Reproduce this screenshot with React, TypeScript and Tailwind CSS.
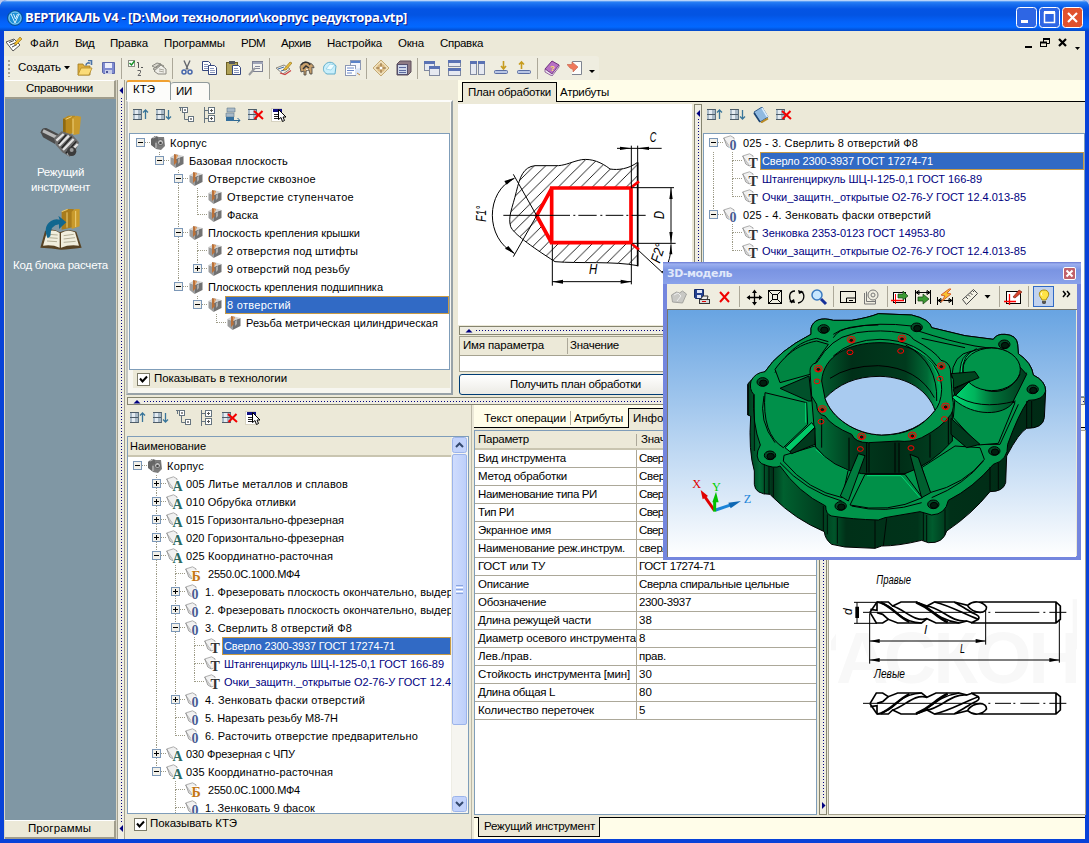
import React, { useLayoutEffect, useRef, useState } from 'react';

/* Text set to a given advance width */
function T({ w, children, className = '' }: { w: number; children: string; className?: string }) {
  const ref = useRef<HTMLSpanElement>(null);
  const [ls, setLs] = useState(0);
  useLayoutEffect(() => {
    const el = ref.current;
    if (!el) return;
    const prev = el.style.letterSpacing;
    el.style.letterSpacing = '0px';
    const nat = el.getBoundingClientRect().width;
    el.style.letterSpacing = prev;
    setLs((w - nat) / children.length);
  }, [w, children]);
  return (
    <span ref={ref} className={`inline-block shrink-0 whitespace-pre ${className}`} style={{ letterSpacing: ls }}>
      {children}
    </span>
  );
}

function Box({ children, s = 16, v = 16, className = '' }: { children: React.ReactNode; s?: number; v?: number; className?: string }) {
  return (
    <svg width={s} height={s} viewBox={`0 0 ${v} ${v}`} className={`shrink-0 ${className}`}>
      {children}
    </svg>
  );
}

const rack = (
  <g>
    <path d="M0 3h9v4H0zM0 8h9v4H0z" fill="#a9b9c6" />
    <path d="M0 2.500H9M0 7.500H9M0 12.500H9" stroke="#4d5c68" />
    <path d="M2 3h3v4H2zM2 8h3v4H2z" fill="#e4ebf1" />
    <path d="M8.500 2.500v10" stroke="#5f7484" />
  </g>
);
const sheet = (x: number, y: number) => (
  <g>
    <path d={`M${x + 0.5} ${y + 0.5}h6l2 2v7h-8z`} fill="#fff" stroke="#35477e" />
    <path d={`M${x + 2} ${y + 3.5}h4M${x + 2} ${y + 5.5}h5M${x + 2} ${y + 7.5}h5`} stroke="#8a97bd" />
  </g>
);
const win = (x: number, y: number, w: number, h: number) => (
  <g>
    <rect x={x + 0.5} y={y + 0.5} width={w} height={h} fill="#e6e9f1" stroke="#8089a0" />
    <rect x={x} y={y} width={w + 1} height={3} fill="#5a72b4" />
  </g>
);

const icons: Record<string, React.ReactNode> = {
  up: <>{rack}<path d="M12.500 12V3M10 5.500L12.500 3 15 5.500" fill="none" stroke="#39759a" strokeWidth="1.300" /></>,
  down: <>{rack}<path d="M12.500 3v9M10 9.500l2.500 2.500L15 9.500" fill="none" stroke="#39759a" strokeWidth="1.300" /></>,
  collapse: (
    <g fill="#fff" stroke="#66747f">
      <path d="M0 .5h3M1.500 0v4M5.500 6v6.500h4" fill="none" />
      <rect x="3.500" y=".5" width="5" height="5" /><path d="M5 3h2" stroke="#222" />
      <rect x="9.500" y="9.500" width="5" height="5" /><path d="M11 12h2" stroke="#222" />
    </g>
  ),
  expand: (
    <g fill="#fff" stroke="#66747f">
      <path d="M2.500 0v16M2.500 3.500h4M2.500 11.500h4" fill="none" />
      <rect x="6.500" y=".5" width="6" height="6" /><path d="M8 3.500h3M9.500 2v3" stroke="#555" />
      <rect x="6.500" y="8.500" width="6" height="6" /><path d="M8 11.500h3M9.500 10v3" stroke="#555" />
    </g>
  ),
  goto: (
    <g>
      <path d="M2 1h8v4H2zM1 6h8v4H1z" fill="#a9bac8" stroke="#61788a" strokeWidth=".6" />
      <path d="M1 10h8v4H1z" fill="#346f9d" />
      <path d="M9 13.500h6M12.500 11l2.500 2.500-2.500 2" fill="none" stroke="#2d6790" />
    </g>
  ),
  del: <>{rack}<path d="M6 4l9 8M14.500 4l-8 8" stroke="#f40000" strokeWidth="2" /></>,
  pick: (
    <g>
      <rect x=".5" y="1.500" width="10" height="13" fill="#fff" stroke="#d6d2c0" />
      <path d="M2 2h9v3H2z" fill="#101080" /><path d="M3 7.500h6M3 9.500h6M3 11.500h5" stroke="#222" />
      <path d="M7.500 2.500v10l2.500-2 1.500 4 2-1-1.500-3.500h3z" fill="#fff" stroke="#000" />
    </g>
  ),
  bookblue: (
    <g>
      <path d="M1 5L9 0l6 10-8 5z" fill="#8fb9e0" stroke="#345e8c" />
      <path d="M9 1l5.500 9" stroke="#d7ecff" strokeWidth="1.500" /><path d="M8 15.500l7-4" stroke="#b98a25" strokeWidth="2" />
      <path d="M1 6l6 9" stroke="#1c4572" strokeWidth="1.500" />
    </g>
  ),
  open: (
    <g>
      <path d="M1 4h5l1 2h6v9H1z" fill="#e0b040" stroke="#a07a1e" strokeWidth=".8" />
      <path d="M1 15l3-7h11l-3 7z" fill="#fbdc78" stroke="#b48a26" strokeWidth=".8" />
      <path d="M9 5.500c0-3 3-3 4-2M11 .5h3.500V5" fill="none" stroke="#4c74a8" strokeWidth="1.600" />
    </g>
  ),
  save: (
    <g>
      <path d="M2.500 2.500h12v11h-11l-1-1z" fill="#7f8bd0" stroke="#5d68aa" />
      <path d="M5 3h7v5H5z" fill="#eceefa" /><path d="M5 10h7v4H5z" fill="#c9cfe8" /><path d="M6 11h2v2H6z" fill="#4a5496" />
    </g>
  ),
  list: (
    <g>
      <rect x=".5" y=".5" width="6" height="6" fill="#fff" stroke="#8a8d84" /><path d="M1.500 3l2 2 3-4" fill="none" stroke="#159024" strokeWidth="1.400" />
      <path d="M9 2.500h1.500V8M13 7.500h2" fill="none" stroke="#555" />
      <path d="M9.500 10.500h3v2L10 15.500h3" fill="none" stroke="#666" />
    </g>
  ),
  cards: (
    <g fill="#d9d7cd" stroke="#8a8981">
      <path d="M1 6l5-3 4 1-5 4zM2 9l7-5 4 2-5 6z" />
      <path d="M3 11l7-6 5 4v5H7z" fill="#efeee8" /><path d="M8 9l5 1M8 11l5 1" stroke="#aaa89e" />
    </g>
  ),
  cut: (
    <g fill="none">
      <path d="M5 0.500l4 9M11 .5l-4 9" stroke="#65686e" strokeWidth="1.400" />
      <circle cx="5" cy="12" r="2" stroke="#4666ac" strokeWidth="1.500" /><circle cx="11" cy="12" r="2" stroke="#4666ac" strokeWidth="1.500" />
    </g>
  ),
  copy: <>{sheet(0, 1)}{sheet(6, 5)}</>,
  paste: (
    <g>
      <rect x="1.500" y="2.500" width="11" height="12" fill="#b0a258" stroke="#6d6128" />
      <path d="M4 1h6v3H4z" fill="#55585c" />{sheet(7, 5)}
    </g>
  ),
  props: (
    <g>
      <rect x="4.500" y="1.500" width="10" height="10" fill="#f4f3ee" stroke="#7c8092" />
      <path d="M5 2h10v2H5z" fill="#a0a5b8" /><path d="M7 6.500h5M7 8.500h5" stroke="#85899b" /><path d="M1 15l6-7" stroke="#999b9f" strokeWidth="2" />
    </g>
  ),
  note: (
    <g>
      <path d="M0 8l8-3 6 4-7 5z" fill="#f0efe9" stroke="#8a8880" /><path d="M2 9l6-2M5 11l6-2" stroke="#3c6ca5" />
      <path d="M7 10l7-8 2 1-6 7z" fill="#e8bd3c" stroke="#8c6c13" strokeWidth=".6" /><path d="M4 13l5 1.500 6-4" fill="none" stroke="#c44" strokeWidth="1.200" />
    </g>
  ),
  horse: (
    <g>
      <path d="M1 7c1-5 6-6 9-4 3 0 5 3 5 5l-2-1v7h-2l-1-4-3 1 0 4H5l0-4-3 1z" fill="#c8a06c" stroke="#444" strokeWidth=".8" />
      <path d="M2 5c3-4 8-3 9 0M4 9l3-3 3 2" fill="none" stroke="#333" strokeWidth="1.500" /><path d="M7 9l2 1" stroke="#fff" />
    </g>
  ),
  drop: (
    <g>
      <path d="M2 6c3-5 9-5 12 0l-1 8H5C1 12 1 9 2 6z" fill="#c9effb" stroke="#62aecb" />
      <path d="M4 9l4-5 5 1-4 5z" fill="#eefcff" stroke="#8acbe2" strokeWidth=".7" />
    </g>
  ),
  pages: (
    <g>
      <rect x="5.500" y=".5" width="10" height="9" fill="#f4f6fc" stroke="#8d99b5" /><path d="M6 1h9v2H6z" fill="#5a82c8" />
      <rect x=".5" y="5.500" width="10" height="10" fill="#fff" stroke="#8d99b5" /><path d="M2 8h7M2 10.500h7M2 13h5" stroke="#6b88c9" />
      <path d="M10 9l5-1v7h-5z" fill="#dbe5f6" /><path d="M12 13l3 2" stroke="#c88c3b" />
    </g>
  ),
  compass: (
    <g>
      <path d="M8 0l8 8-8 8-8-8z" fill="#efdfba" stroke="#c4a973" />
      <circle cx="8" cy="8" r="4" fill="#dcbb83" /><path d="M8 3v10M3 8h10" stroke="#8c683a" /><circle cx="8" cy="8" r="1.500" fill="#fff" />
    </g>
  ),
  cabinet: (
    <g>
      <path d="M1 4l3-3h11v11l-3 3H1z" fill="#8d7a84" stroke="#5f505c" /><rect x="1.500" y="4.500" width="10" height="10" fill="#cfd8ea" stroke="#55506c" />
      <path d="M3 7.500h7M3 10.500h7M3 12.500h7" stroke="#5c6aa0" />
    </g>
  ),
  cascade: <>{win(0, 1, 10, 9)}{win(5, 6, 10, 9)}</>,
  tileh: <>{win(1, 0, 12, 6)}{win(1, 8, 12, 7)}</>,
  tilev: <>{win(0, 1, 6, 13)}{win(8, 1, 6, 13)}</>,
  trayin: (
    <g>
      <rect x="1.500" y="10.500" width="13" height="3" rx="1" fill="#b9c6e5" stroke="#5a6da3" />
      <path d="M10.500 1v7M8 6l2.500 3L13 6" fill="none" stroke="#c79c1e" strokeWidth="1.600" />
    </g>
  ),
  trayout: (
    <g>
      <rect x="1.500" y="10.500" width="13" height="3" rx="1" fill="#b9c6e5" stroke="#5a6da3" />
      <path d="M5.500 9V2M3 4.500L5.500 2 8 4.500" fill="none" stroke="#c79c1e" strokeWidth="1.600" />
    </g>
  ),
  help: (
    <g>
      <path d="M1 9L8 1l7 4-7 9z" fill="#b870c4" stroke="#6e3080" /><path d="M1 9v3l7 4 7-9V5l-7 9z" fill="#efe7f4" stroke="#6e3080" strokeWidth=".7" />
      <text x="6" y="10.500" fontSize="8" fontWeight="bold" fill="#ffe65e" fontFamily="Liberation Sans">?</text>
    </g>
  ),
  exit: (
    <g>
      <path d="M5.500 3V1.500h9v13H5" fill="#fdfdfb" stroke="#7f8490" />
      <path d="M0 4.500h5V2l6 5-5 5V9.500L3 8z" fill="#f0785a" stroke="#c86b54" strokeWidth=".7" />
    </g>
  ),
  doc: (
    <g>
      <path d="M0 6l8-3 6 6-7 6z" fill="#fff" stroke="#555" /><path d="M3 6.500l5-2M4 9l6-2.500M6 11l5-2.500" stroke="#444" />
      <path d="M8 8l6-7 2 2-6 6z" fill="#f3bd2a" stroke="#8c6a14" strokeWidth=".6" />
    </g>
  ),
  part: (
    <g>
      <path d="M1 4l4-3 4 1 5 0 1 9-4 4-5-1-4-4z" fill="#7c7c7c" /><path d="M1 4l4-3 3 1v4l-3 1v6l-4-3z" fill="#666" />
      <circle cx="10.500" cy="7.500" r="3" fill="#c4c4c4" stroke="#5d5d5d" /><circle cx="10.500" cy="8" r="1.300" fill="#444" /><path d="M3 3l3-1.500M6 13V8" stroke="#c8c8c8" />
    </g>
  ),
  cube: (
    <g>
      <path d="M1.500 4l5 2v9l-5-4z" fill="#9c9c9c" /><path d="M6.500 6l8-3v8l-8 4z" fill="#727272" /><path d="M1.500 4l5-3 8 2-8 3z" fill="#d3d3d3" />
      <path d="M5 1l4 1-2 4 1 3-3 3V6z" fill="#b9713a" /><path d="M7 2l2 .5-2 4" fill="#e2a36a" />
      <path d="M9 6l2-1v4l-2 2z" fill="#ababab" />
    </g>
  ),
};

const Card = ({ l, c }: { l: string; c: string }) => (
  <g>
    <path d="M.5 3L7.500 .8l3.500 2v9l-3.500 1z" fill="#f1f1f1" stroke="#9c9c9c" strokeWidth=".8" />
    <path d="M.8 3.500l6.500 9-3-2z" fill="#cfcfcf" /><path d="M.8 3l3 8 3.500 2" fill="none" stroke="#888" strokeWidth=".8" />
    <text x="6.500" y="15.200" fontSize="14" fontWeight="bold" fontFamily="Liberation Serif" fill={c} stroke="#fff" strokeWidth="1.500" paintOrder="stroke">{l}</text>
  </g>
);

function Icon({ n, className = '' }: { n: string; className?: string }) {
  if (n === 'A') return <Box className={`overflow-visible ${className}`}><Card l="A" c="#2c6a63" /></Box>;
  if (n === 'B') return <Box className={`overflow-visible ${className}`}><Card l="Б" c="#c57716" /></Box>;
  if (n === 'O') return <Box className={`overflow-visible ${className}`}><Card l="0" c="#4a5c92" /></Box>;
  if (n === 'T') return <Box className={`overflow-visible ${className}`}><Card l="T" c="#333" /></Box>;
  return <Box className={className}>{icons[n]}</Box>;
}

/* One indent cell of a tree: guide lines and expander */
function Cell({ k }: { k: string }) {
  const v = '#9c9a86';
  const top = '|+-LEpm'.includes(k);
  const bottom = '|+-L'.includes(k);
  const ex = '+-pmr'.includes(k);
  const plus = k === '+' || k === 'p';
  return (
    <svg width="19" height="18" viewBox="0 0 19 18" className="shrink-0" shapeRendering="crispEdges">
      {top && <path d="M9.500 0V9" stroke={v} strokeDasharray="1 1" />}
      {bottom && <path d="M9.500 9V18" stroke={v} strokeDasharray="1 1" />}
      {(k === 'L' || k === 'E' || ex) && <path d="M10 8.500H19" stroke={v} strokeDasharray="1 1" />}
      {ex && (
        <g>
          <rect x="5.500" y="4.500" width="8" height="8" fill="#f3f1ea" stroke="#7b97b7" />
          <path d="M7 8.500h5" stroke="#000" />
          {plus && <path d="M9.500 6v5" stroke="#000" />}
        </g>
      )}
    </svg>
  );
}

type Row = { g: string; i: string; t: string; w: number; sel?: boolean; blue?: boolean; pad?: number };

function Tree({ rows }: { rows: Row[] }) {
  return (
    <div className="flex flex-col text-[11px] leading-[18px]">
      {rows.map((r, n) => (
        <div key={n} className="flex h-[18px] shrink-0 items-center">
          {r.g.split('').map((k, j) => <Cell key={j} k={k} />)}
          <Icon n={r.i} />
          <div
            className={
              r.sel
                ? 'ml-[2px] flex h-[18px] flex-1 items-center overflow-hidden border border-[#c89b45] bg-[#316ac5] pl-px text-white'
                : r.blue
                  ? 'flex h-[18px] flex-1 items-center overflow-hidden pl-[4px] text-[#000080]'
                  : 'flex h-[18px] flex-1 items-center overflow-hidden pl-[4px] text-black'
            }
          >
            {r.pad ? <span className="w-[3px] shrink-0" /> : null}
            <T w={r.w}>{r.t}</T>
          </div>
        </div>
      ))}
    </div>
  );
}

const tree1: Row[] = [
  { g: 'r', i: 'part', t: 'Корпус', w: 37 },
  { g: ' m', i: 'cube', t: 'Базовая плоскость', w: 99 },
  { g: '  -', i: 'cube', t: 'Отверстие сквозное', w: 108 },
  { g: '  |L', i: 'cube', t: 'Отверстие ступенчатое', w: 127 },
  { g: '  |E', i: 'cube', t: 'Фаска', w: 31 },
  { g: '  -', i: 'cube', t: 'Плоскость крепления крышки', w: 152 },
  { g: '  |L', i: 'cube', t: '2 отверстия под штифты', w: 131 },
  { g: '  |p', i: 'cube', t: '9 отверстий под резьбу', w: 123 },
  { g: '  m', i: 'cube', t: 'Плоскость крепления подшипника', w: 175 },
  { g: '   m', i: 'cube', t: '8 отверстий', w: 64, sel: true },
  { g: '    E', i: 'cube', t: 'Резьба метрическая цилиндрическая', w: 192 },
];
const tree2: Row[] = [
  { g: 'r', i: 'part', t: 'Корпус', w: 37 },
  { g: ' +', i: 'A', t: '005 Литье металлов и сплавов', w: 162 },
  { g: ' +', i: 'A', t: '010 Обрубка отливки', w: 110 },
  { g: ' +', i: 'A', t: '015 Горизонтально-фрезерная', w: 158 },
  { g: ' +', i: 'A', t: '020 Горизонтально-фрезерная', w: 158 },
  { g: ' -', i: 'A', t: '025 Координатно-расточная', w: 147 },
  { g: ' |L', i: 'B', t: '2550.0С.1000.МФ4', w: 92, pad: 3 },
  { g: ' |+', i: 'O', t: '1. Фрезеровать плоскость окончательно, выдер', w: 248 },
  { g: ' |+', i: 'O', t: '2. Фрезеровать плоскость окончательно, выдер', w: 248 },
  { g: ' |-', i: 'O', t: '3. Сверлить 8 отверстий Ф8', w: 147 },
  { g: ' ||L', i: 'T', t: 'Сверло 2300-3937 ГОСТ 17274-71', w: 171, sel: true },
  { g: ' ||L', i: 'T', t: 'Штангенциркуль ШЦ-I-125-0,1 ГОСТ 166-89', w: 220, blue: true },
  { g: ' ||E', i: 'T', t: 'Очки_защитн._открытые О2-76-У ГОСТ 12.4', w: 227, blue: true },
  { g: ' |+', i: 'O', t: '4. Зенковать фаски отверстий', w: 160 },
  { g: ' |L', i: 'O', t: '5. Нарезать резьбу М8-7Н', w: 133 },
  { g: ' |E', i: 'O', t: '6. Расточить отверстие предварительно', w: 213 },
  { g: ' +', i: 'A', t: '030 Фрезерная с ЧПУ', w: 109 },
  { g: ' m', i: 'A', t: '035 Координатно-расточная', w: 147 },
  { g: '  L', i: 'B', t: '2550.0С.1000.МФ4', w: 92, pad: 3 },
  { g: '  L', i: 'O', t: '1. Зенковать 9 фасок', w: 110 },
];
const tree3: Row[] = [
  { g: 'r', i: 'O', t: '025 - 3. Сверлить 8 отверстий Ф8', w: 175 },
  { g: '|L', i: 'T', t: 'Сверло 2300-3937 ГОСТ 17274-71', w: 171, sel: true },
  { g: '|L', i: 'T', t: 'Штангенциркуль ШЦ-I-125-0,1 ГОСТ 166-89', w: 220, blue: true },
  { g: '|E', i: 'T', t: 'Очки_защитн._открытые О2-76-У ГОСТ 12.4.013-85', w: 264, blue: true },
  { g: 'm', i: 'O', t: '025 - 4. Зенковать фаски отверстий', w: 188 },
  { g: ' L', i: 'T', t: 'Зенковка 2353-0123 ГОСТ 14953-80', w: 183, blue: true },
  { g: ' E', i: 'T', t: 'Очки_защитн._открытые О2-76-У ГОСТ 12.4.013-85', w: 264, blue: true },
];

const params: [string, number, string, number][] = [
  ['Вид инструмента', 88, 'Сверло', 36],
  ['Метод обработки', 89, 'Сверление', 56],
  ['Наименование типа РИ', 119, 'Сверло', 36],
  ['Тип РИ', 36, 'Сверло', 36],
  ['Экранное имя', 73, 'Сверло', 36],
  ['Наименование реж.инструм.', 147, 'сверло', 36],
  ['ГОСТ или ТУ', 67, 'ГОСТ 17274-71', 76],
  ['Описание', 51, 'Сверла спиральные цельные', 150],
  ['Обозначение', 68, '2300-3937', 52],
  ['Длина режущей части', 113, '38', 13],
  ['Диаметр осевого инструмента', 158, '8', 6],
  ['Лев./прав.', 54, 'прав.', 27],
  ['Стойкость инструмента [мин]', 152, '30', 13],
  ['Длина общая L', 77, '80', 13],
  ['Количество переточек', 116, '5', 6],
];

function VSplit({ bottom = false, className = '' }: { bottom?: boolean; className?: string }) {
  return (
    <div className={`flex shrink-0 flex-col items-center border border-[#85846f] bg-[#efede2] ${className}`}>
      {!bottom && <svg width="5" height="14" className="shrink-0"><path d="M4 5v7L.5 8.500z" fill="#000080" /></svg>}
      <div className="w-px flex-1 bg-[repeating-linear-gradient(to_bottom,#000080_0_1px,transparent_1px_3px)]" />
      {bottom && <svg width="5" height="14" className="shrink-0"><path d="M1 2v7l3.500-3.500z" fill="#000080" /></svg>}
    </div>
  );
}
function HSplit({ className = '' }: { className?: string }) {
  return (
    <div className={`flex shrink-0 items-center border border-[#85846f] bg-[#efede2] ${className}`}>
      <svg width="16" height="5" className="shrink-0"><path d="M5.500 4.500h7L9 1z" fill="#000080" /></svg>
      <div className="h-px flex-1 bg-[repeating-linear-gradient(to_right,#000080_0_1px,transparent_1px_3px)]" />
    </div>
  );
}
const Sep = () => (
  <div className="flex w-[5px] shrink-0 justify-center">
    <div className="h-[21px] w-px bg-[#aca899]" />
  </div>
);
const Btn = ({ n }: { n: string }) => (
  <div className="flex w-[23px] shrink-0 justify-center"><Icon n={n} /></div>
);
const Check = () => (
  <div className="flex h-[13px] w-[13px] shrink-0 items-center justify-center border border-[#7c7a68] bg-white">
    <svg width="9" height="9"><path d="M1 3.500l2.500 3L8 1.500" fill="none" stroke="#000" strokeWidth="2" /></svg>
  </div>
);

/* Sectional sketch of a blind drilled hole */
function HoleSketch() {
  return (
    <svg width="234" height="221" viewBox="9 87 702 663" className="block shrink-0 bg-white">
      <defs>
        <pattern id="hatch" width="34" height="34" patternUnits="userSpaceOnUse">
          <path d="M-3 37L37 -3M-3 3L3 -3M31 37L37 31" stroke="#000" strokeWidth="2.600" fill="none" />
        </pattern>
      </defs>
      <path d="M548 262C520 282 490 286 465 282C440 262 410 250 380 254C350 260 335 270 310 272H240C205 276 195 305 184 350C172 400 158 425 167 455C175 475 225 512 300 560C370 566 480 558 548 572Z" fill="url(#hatch)" stroke="#000" strokeWidth="3" />
      <path d="M245 422L290 340H528L548 322V520L528 504H290Z" fill="#fff" />
      <path d="M548 262V574" stroke="#000" strokeWidth="5" />
      <path d="M290 335V508M285 339H532M285 503H532M528 336V506M290 340L245 422L290 504" fill="none" stroke="#f00" strokeWidth="11" />
      <path d="M530 336L552 319M530 506L552 524" stroke="#f00" strokeWidth="8" />
      <path d="M145 421H345M355 421h6M370 421H425M436 421h6M452 421H505M514 421h6M530 421H572" stroke="#000" strokeWidth="3" />
      <g fill="none" stroke="#000" strokeWidth="3">
        <path d="M175 298L245 422L175 545M178 310C90 350 90 490 178 535" />
        <path d="M292 508V632M529 508V628M292 620H529M486 220H620M529 212V340M548 212V262M532 338H657M532 505H662M648 338V505M548 524L630 600M648 508C648 550 636 580 620 592" />
      </g>
      <g fill="#000">
        <path d="M292 620l32-6v12zM529 620l-32-6v12zM529 220l-34-5v10zM548 220l34-5v10zM648 338l-5 34h10zM648 505l-5-34h10zM648 508l-5 30h9zM180 308l-32 10 7 11zM180 537l-20-24-10 8z" />
      </g>
      <g fontFamily="Liberation Sans" fontStyle="italic" fontSize="43" fill="#000">
        <text x="584" y="201" textLength="20" lengthAdjust="spacingAndGlyphs">C</text>
        <text x="402" y="598" textLength="25" lengthAdjust="spacingAndGlyphs">H</text>
        <text transform="translate(627 432) rotate(-90)" textLength="24" lengthAdjust="spacingAndGlyphs">D</text>
        <text transform="translate(92 440) rotate(-90)" textLength="48" lengthAdjust="spacingAndGlyphs">F1°</text>
        <text transform="translate(614 566) rotate(-72)" textLength="58" lengthAdjust="spacingAndGlyphs">F2°</text>
      </g>
    </svg>
  );
}

const DrillBody = () => (
  <g fill="none" stroke="#000" strokeWidth="5">
    <path d="M207 169L228 138H262L275 150L300 138H345L378 150L400 138H460L500 148C520 130 545 138 556 152C560 175 520 175 500 150M520 138H765L778 150V190L765 201H510L532 190C540 178 520 175 505 165C490 155 470 145 460 138M765 138V201M207 169L226 201H245L262 190L290 201H362L378 188L405 201H475L498 195L515 201" />
    <path d="M228 138C262 145 275 160 292 175C310 190 330 200 362 201M275 150C310 160 340 200 378 188M345 138C390 150 400 190 475 201M378 150C420 155 450 200 498 195M228 170L245 175L262 190M400 138C450 150 480 170 532 190" />
    <path d="M240 140C275 155 290 180 325 198M345 139C395 160 400 180 440 199" strokeWidth="7" />
    <path d="M228 140V163L208 160" />
  </g>
);
function DrillSketch() {
  return (
    <svg width="256" height="383" viewBox="84 -375 768 1149" className="block bg-white">
      <text x="105" y="382" fontFamily="Liberation Sans" fontWeight="bold" fontSize="218" fill="#f8f8f8" textLength="735">АСКОН</text>
      <path d="M815 130h13v150h-13zM90 255l15-22v50H90z" fill="#f8f8f8" />
      <DrillBody />
      <g transform="translate(0 612) scale(1 -1)"><DrillBody /></g>
      <path d="M186 169H545M562 169h6M582 169H715M727 169h6M745 169H796M186 442H545M562 442h6M582 442H630M637 442h6M658 442H715M727 442h6M745 442H796" stroke="#000" strokeWidth="3" />
      <path d="M159 139H228M159 202H228M168 139V202M206 172V323M554 165V266M775 190V320M206 255H554M206 312H775" stroke="#000" strokeWidth="3" />
      <path d="M206 255l30-6v12zM554 255l-30-6v12zM206 312l30-6v12zM775 312l-30-6v12zM163 152h11v34h-11z" fill="#000" />
      <g fontFamily="Liberation Sans" fontStyle="italic" fontSize="36" fill="#000">
        <text x="226" y="84" textLength="104" lengthAdjust="spacingAndGlyphs">Правые</text>
        <text x="219" y="366" textLength="93" lengthAdjust="spacingAndGlyphs">Левые</text>
        <text x="370" y="234">l</text>
        <text x="477" y="292" textLength="15" lengthAdjust="spacingAndGlyphs">L</text>
        <text transform="translate(152 177) rotate(-90)">d</text>
      </g>
    </svg>
  );
}

const bolts = [[476, 84], [755, 79], [1018, 130], [1103, 265], [988, 450], [805, 610], [527, 615], [315, 463], [293, 243]];
const holes = [[559, 116], [711, 112], [829, 195], [842, 316], [742, 403], [590, 406], [472, 324], [460, 203]];

/* Gearbox housing */
function Model() {
  return (
    <svg width="408" height="247" viewBox="9 27 1224 741" className="block">
      <defs>
        <linearGradient id="sky" x1="0" y1="0" x2="0" y2="1"><stop offset="0" stopColor="#68a4e2" /><stop offset="1" stopColor="#fff" /></linearGradient>
        <linearGradient id="side" x1="248" x2="1142" y1="0" y2="0" gradientUnits="userSpaceOnUse">
          <stop offset="0" stopColor="#003a1d" /><stop offset=".04" stopColor="#006b36" /><stop offset=".08" stopColor="#00341a" /><stop offset=".12" stopColor="#00602f" />
          <stop offset=".25" stopColor="#003c1e" /><stop offset=".29" stopColor="#00552a" /><stop offset=".33" stopColor="#003018" /><stop offset=".57" stopColor="#00331a" />
          <stop offset=".62" stopColor="#005c2e" /><stop offset=".68" stopColor="#003018" /><stop offset="1" stopColor="#002a15" />
        </linearGradient>
        <linearGradient id="wall" x1="0" y1="0" x2="1" y2="0"><stop offset="0" stopColor="#005c2e" /><stop offset=".25" stopColor="#002f18" /><stop offset=".7" stopColor="#003a1d" /><stop offset=".88" stopColor="#006a36" /><stop offset="1" stopColor="#00b45c" /></linearGradient>
        <linearGradient id="boss" x1="0" y1="0" x2="1" y2="0"><stop offset="0" stopColor="#007a3e" /><stop offset=".3" stopColor="#003a1d" /><stop offset=".6" stopColor="#002c16" /><stop offset="1" stopColor="#004422" /></linearGradient>
        <linearGradient id="dome" x1="0" y1="0" x2="1" y2="0"><stop offset="0" stopColor="#00d873" /><stop offset=".3" stopColor="#00b45c" /><stop offset=".55" stopColor="#006f38" /><stop offset="1" stopColor="#003a1d" /></linearGradient>
      </defs>
      <rect x="9" y="27" width="1224" height="741" fill="url(#sky)" />
      <g stroke="#000" strokeWidth="3" strokeLinejoin="round">
        <path fill="url(#side)" d="M438 82C444 56 470 48 505 58L560 58Q610 50 640 38L740 42Q795 55 800 80L900 104L985 115Q995 98 1020 100Q1055 102 1058 130L1060 158Q1100 185 1105 222Q1142 240 1142 270L1138 350Q1135 382 1085 382Q1062 395 1025 465L1022 545Q1015 572 975 572Q920 640 845 690Q835 728 790 725L770 718Q700 735 650 735L630 742L540 738L500 730Q480 715 478 692Q390 655 325 590L315 580Q270 580 268 550L268 510Q250 450 257 345L248 342V250Q258 232 300 212Q340 150 438 100Z" />
        <path fill="#00944a" d="M438 82C444 56 470 48 505 58L560 58Q610 50 640 38L740 42Q795 55 800 80L900 104L985 115Q995 98 1020 100Q1055 102 1058 130L1060 158Q1100 185 1105 222Q1142 240 1142 270Q1135 298 1090 298Q1060 340 1028 430Q1030 478 985 490Q925 560 850 598Q842 640 800 642L765 632L660 650L640 657Q560 655 500 645Q482 640 482 615Q400 575 345 495Q330 505 290 488Q265 470 286 432Q262 370 266 280Q252 265 258 240Q270 215 300 212Q340 150 438 100Z" />
        <path fill="none" d="M330 215C370 145 410 120 455 112L490 122M505 110Q520 85 560 80Q640 62 740 75M505 100Q540 72 640 72M760 90Q850 120 930 135L1000 145M770 112L900 140M297 285Q280 360 330 425M308 290Q295 360 335 415M345 485Q420 570 530 600M560 615Q660 640 770 605M800 590Q900 550 955 480M1085 215L1035 310M1060 310L1005 430Q970 430 945 430" />
        <path fill="#008642" d="M345 245L330 205C370 150 410 128 455 120L490 130L455 180L435 220Z" />
        <path fill="#00904a" d="M300 275L425 305L428 370L355 440Q290 400 300 275Z" />
        <path fill="#00924a" d="M357 463L450 435C480 470 510 490 550 505L532 590Q430 570 355 480Z" />
        <path fill="#009048" d="M600 520H720L772 590Q670 640 555 612Z" />
        <path fill="#00924a" d="M770 500L870 435L945 440L958 475Q900 550 795 575Z" />
        <path fill="#00924a" d="M865 350L870 290L1050 305L1000 427L940 432Z" />
        <path fill="none" stroke="#00d873" d="M422 305V365M452 445Q490 480 548 508M606 524H708L765 590" />
        <path fill="#00502a" d="M345 262L432 225L440 300L430 300Z" />
        <path fill="url(#dome)" d="M862 290C900 240 870 190 905 160C960 125 1045 135 1062 195L1085 220L1040 310C1000 350 910 340 862 290Z" />
        <path fill="none" d="M867 280Q940 330 1052 300M860 230Q862 160 920 150" />
        <ellipse cx="980" cy="205" rx="86" ry="64" fill="#00944a" /><path d="M893 215Q890 160 935 143M1065 220Q1030 285 960 268" fill="none" />
        <path fill="url(#boss)" d="M440 290L452 438Q500 500 590 518L720 518Q800 490 862 420V300Z" />
        <path fill="none" d="M470 350V440M552 410V505M605 425V515M702 425V515M795 400V470M850 350V430M612 425V515M690 425V515" />
        <path fill="#00c968" d="M360 440L440 365L450 378L375 452Z" /><path fill="#003a1d" d="M375 452L450 380V430L380 458Z" />
        <path fill="#007c3e" d="M580 458L600 464L550 600L526 585Z" /><path fill="#00602f" d="M735 460L760 470L797 575L770 590Z" />
        <path fill="#003a1d" d="M858 352L945 430L905 440L858 400Z" /><path fill="#00451f" d="M858 218L930 212L942 230L865 262V236Z" /><path d="M865 265L915 240L870 285Z" fill="#002b15" />
        <path fill="#00944a" d="M435 210Q435 190 455 185Q500 110 560 100L575 95Q650 84 710 96Q735 98 745 115Q810 150 828 178Q852 182 856 205L862 290Q870 320 858 340Q830 380 770 410Q735 425 700 420L610 425Q570 425 560 400Q500 375 480 345Q455 340 455 310L440 285Z" />
        <path fill="url(#wall)" d="M470 240C475 165 550 125 645 125C745 125 830 180 830 265Q828 310 808 330C770 380 720 402 650 402C570 400 500 350 480 292Z" />
        <path fill="none" d="M495 232Q550 194 640 194Q760 200 808 290M722 132Q820 185 815 300M505 165Q560 115 645 115Q760 118 815 195" />
        <path fill="none" stroke="#00bd62" d="M745 140Q820 185 822 250" />
        <path fill="#a9cbf0" stroke="#000" d="M480 292C520 250 570 226 645 226C730 228 790 270 810 328C775 375 720 401 650 402C570 400 500 350 480 292Z" />
        {bolts.map(([x, y]) => (
          <g key={x}>
            <ellipse cx={x} cy={y} rx="17" ry="13" fill="#004d27" /><ellipse cx={x + 2} cy={y + 3} rx="11" ry="9" fill="#001d0e" />
          </g>
        ))}
        <path d="M268 280V450M298 490V580M312 495V580M325 500V590M475 615V690M487 640V700M517 650V728M665 652L655 735M630 658V742M775 635V718M785 642V722M840 625V700M975 498V570M1000 485V565M1085 300V382M1100 300V380M250 250V342" fill="none" strokeWidth="2.500" />
      </g>
      <g fill="none" stroke="#f00" strokeWidth="3">
        {holes.map(([x, y]) => (
          <g key={x}>
            <ellipse cx={x} cy={y} rx="12" ry="10" /><ellipse cx={x} cy={y + 2} rx="7" ry="6" fill="#001d0e" /><ellipse cx={x - 4} cy={y + 38} rx="9" ry="7" />
          </g>
        ))}
      </g>
      <g strokeWidth="9">
        <path d="M148 628L120 588" stroke="#e00000" /><path d="M107 567l6 28 16-10z" fill="#e00000" />
        <path d="M152 627L200 611" stroke="#1b84d8" /><path d="M228 600l-38 5 7 17z" fill="#0f68b4" />
        <path d="M149 632V598" stroke="#00c000" /><path d="M153 572l-11 32h19z" fill="#00c000" />
      </g>
      <g fontFamily="Liberation Serif" fontSize="37">
        <text x="82" y="560" fill="#e00000">X</text><text x="141" y="569" fill="#00d000">Y</text><text x="236" y="606" fill="#1b84d8">Z</text>
      </g>
    </svg>
  );
}

/* Toolbar of the 3D window */
const V = ({ children, w }: { children?: React.ReactNode; w: number }) => (
  <svg width={w} height="18" viewBox={`0 0 ${w} 18`} className="shrink-0" fill="none" stroke="#000">{children}</svg>
);
function ModelBar() {
  return (
    <div className="flex h-[25px] shrink-0 items-center bg-[#efede0] pl-[3px]">
      <V w={23}><path d="M1.500 7l5-3 3 1 3-2 4 3-4 9-10-1z" fill="#c9c9c5" stroke="#a4a4a0" /><path d="M4 7l4-2 3 3-4 5" stroke="#eee" /></V>
      <V w={24}>
        <path d="M1.500 1.500h9v9h-8l-1-1z" fill="#23408f" stroke="#142a66" /><path d="M4 2h5v3H4zM4 7h4v3H4z" fill="#dfe5f5" stroke="none" />
        <path d="M7 12l3-4h5l-1 4z" fill="#eee" stroke="#333" /><rect x="6.500" y="11.500" width="10" height="4" fill="#d8d8d8" stroke="#333" /><path d="M9 13.500h4" stroke="#d00" />
      </V>
      <V w={20}><path d="M3 4l9 10M12 4L3 14" stroke="#f00000" strokeWidth="2" /></V>
      <Sep />
      <V w={25}>
        <path d="M12.500 3v13M6 9.500h13" strokeWidth="1.300" />
        <path d="M12.500 1.500L10 5h5zM12.500 17.500L10 14h5zM4.500 9.500L8 7v5zM20.500 9.500L17 7v5z" fill="#000" stroke="none" />
      </V>
      <V w={20}><rect x="1.500" y="2.500" width="13" height="13" /><rect x="5.500" y="6.500" width="5" height="5" /><path d="M2 3l3 3M14 3l-3 3M2 15l3-3M14 15l-3-3" /></V>
      <V w={22}><path d="M8 3C2 3 1 10 5 15M11 15c6-1 8-8 3-12" strokeWidth="1.300" /><path d="M2 14l6 1-1-4zM17 4l-6-2 1 4z" fill="#000" stroke="none" /></V>
      <V w={22}><circle cx="8" cy="7" r="5" fill="#c8e7ff" stroke="#3b7ac0" strokeWidth="1.500" /><path d="M12 11l5 5" stroke="#16309a" strokeWidth="3" /></V>
      <Sep />
      <V w={26}><rect x="4.500" y="3.500" width="15" height="11" /><path d="M10.500 14v-4h9M13 12.500h4" /></V>
      <V w={23}><g stroke="#777"><circle cx="11" cy="7" r="5" /><circle cx="11" cy="7" r="2" /><path d="M2.500 5v11h11v-4M4.500 3.500v10h9" /></g></V>
      <Sep />
      <V w={23}>
        <rect x="3.500" y="4.500" width="12" height="10" fill="#fff" /><path d="M1 12.500h13" stroke="#f00" strokeWidth="1.500" /><path d="M5.500 6v10" stroke="#f00" />
        <path d="M8 6h5V3l5 5-5 4V10H8z" fill="#3b9b32" stroke="#163f12" strokeWidth=".7" />
      </V>
      <V w={22}>
        <path d="M2.500 2v14M17.500 2v14M3 4.500h14M3 4.500l3-2v4zM17 4.500l-3-2v4z" />
        <path d="M5 9h5V6l6 5-6 5v-3H5z" fill="#3b9b32" stroke="#163f12" strokeWidth=".7" />
      </V>
      <V w={25}><path d="M2.500 9v8M17.500 9v8M3 12.500h14M3 12.500l3-2v4zM17 12.500l-3-2v4z" /><path d="M14 1l-8 6 4 1-4 6 10-8-4-1 4-4z" fill="#f8c230" stroke="#d8602b" /></V>
      <V w={23}><path d="M2.500 11.500l11-10 4 4-11 11z" fill="#f3f1e4" stroke="#444" /><path d="M6 9l2 2M8.500 7l1.500 1.500M10.500 5l2 2M13 3l1 1" stroke="#444" /></V>
      <V w={14}><path d="M1.500 7h6l-3 3.500z" fill="#000" stroke="none" /></V>
      <Sep />
      <V w={24}>
        <rect x="4.500" y="3.500" width="14" height="12" fill="#fff" /><path d="M2 13.500h12M7.500 6v11" stroke="#f00" strokeWidth="1.300" /><path d="M11 9l6-7 3 2-7 6z" fill="#d8432b" stroke="#7c2416" strokeWidth=".7" />
      </V>
      <Sep />
      <div className="ml-[2px] flex h-[21px] w-[21px] shrink-0 items-center justify-center border border-[#316ac5] bg-[#c1d2ee]">
        <Box><path d="M8 1c-5 0-6 5-3 8l1 2h4l1-2c3-3 2-8-3-8z" fill="#ffe345" stroke="#a98a10" /><path d="M6 3.500c-1 1-1 2 0 3" stroke="#fff" fill="none" /><path d="M6 12h4v2l-1 1H7l-1-1z" fill="#555" /></Box>
      </div>
      <svg width="18" height="24" className="shrink-0"><path d="M9 6l2.500 3L9 12M13 6l2.500 3-2.500 3" fill="none" stroke="#000" strokeWidth="1.500" /></svg>
    </div>
  );
}

export default function App() {
  return (
    <div className="relative h-[843px] w-[1089px] overflow-hidden bg-[#b8c8ee] font-['Liberation_Sans',sans-serif] text-[11.5px] leading-none text-black">
      <div className="flex h-full flex-col overflow-hidden rounded-t-[7px] bg-[#0842d8]">
        {/* title bar */}
        <div className="flex h-[31px] shrink-0 items-center bg-[linear-gradient(to_bottom,#e4eefc_0,#2a80f4_2px,#1a70f0_4px,#0454e4_9px,#0354e2_15px,#0462fa_22px,#0268ff_27px,#0348c8_31px)] pl-[7px] pt-[4px]">
          <svg width="16" height="16" viewBox="0 0 16 16" className="shrink-0"><circle cx="8" cy="8" r="7.500" fill="#1b8fd6" stroke="#0b4d96" /><circle cx="8" cy="8" r="6" fill="none" stroke="#a9dbf5" strokeWidth=".8" /><path d="M4 4l4 9 4-9M6.500 4l2 5 2-5" fill="none" stroke="#d7f0ff" /></svg>
          <T w={382} className="ml-[2px] font-['Open_Sans'] text-[13px] font-bold text-white [text-shadow:1px_1px_0_#0a1883]">ВЕРТИКАЛЬ V4 - [D:\Мои технологии\корпус редуктора.vtp]</T>
          <div className="ml-auto mr-[6px] flex gap-[2px]">
            <svg width="21" height="21"><rect x=".5" y=".5" width="20" height="20" rx="3" fill="#2e66e4" stroke="#fff" /><path d="M5 14.500h7" stroke="#fff" strokeWidth="3" /></svg>
            <svg width="21" height="21"><rect x=".5" y=".5" width="20" height="20" rx="3" fill="#2e66e4" stroke="#fff" /><path d="M5.500 5v10.500h10V5M5 6h11" fill="none" stroke="#fff" strokeWidth="1.500" /><path d="M5 5.500h11" stroke="#fff" strokeWidth="3" /></svg>
            <svg width="21" height="21"><rect x=".5" y=".5" width="20" height="20" rx="3" fill="#e0512d" stroke="#fff" /><path d="M6 6l9 9M15 6l-9 9" stroke="#fff" strokeWidth="2.200" /></svg>
          </div>
        </div>

        <div className="mx-[4px] flex h-[808px] shrink-0 flex-col bg-[#ece9d8]">
          {/* menu */}
          <div className="flex h-[25px] shrink-0 items-center pl-[2px]">
            <Icon n="doc" />
            <div className="ml-[8px] flex gap-[16px]">
              <T w={29}>Файл</T><T w={19}>Вид</T><T w={38}>Правка</T><T w={61}>Программы</T><T w={24}>PDM</T><T w={30}>Архив</T><T w={55}>Настройка</T><T w={26}>Окна</T><T w={43}>Справка</T>
            </div>
            <svg width="62" height="16" className="ml-auto"><g stroke="#000" fill="none"><path d="M2 11h7" strokeWidth="2" /><path d="M20.500 2.500h6v5h-6z" /><path d="M20 3h7" strokeWidth="2" /><rect x="17.500" y="6.500" width="6" height="4" fill="#ece9d8" /><path d="M17 6.500h7" strokeWidth="2" /><path d="M36 3l7 7M43 3l-7 7" strokeWidth="2.200" /></g><path d="M52 11h5l-2.500 3z" /></svg>
          </div>

          {/* toolbar */}
          <div className="flex h-[24px] w-[595px] shrink-0 items-center rounded-r-[3px] bg-[#efede0]">
            <div className="ml-[4px] h-[17px] w-[2px] shrink-0 bg-[repeating-linear-gradient(to_bottom,#a9a592_0_2px,transparent_2px_4px)]" />
            <T w={43} className="ml-[8px]">Создать</T>
            <svg width="8" height="4" className="ml-[2px] mr-[2px] shrink-0"><path d="M1 0h6L4 3.500z" /></svg>
            <Btn n="open" /><Btn n="save" /><Sep />
            <Btn n="list" /><Btn n="cards" /><Sep />
            <Btn n="cut" /><Btn n="copy" /><Btn n="paste" /><Btn n="props" /><Sep />
            <Btn n="note" /><Btn n="horse" /><Btn n="drop" /><Btn n="pages" /><Sep />
            <Btn n="compass" /><Btn n="cabinet" /><Sep />
            <Btn n="cascade" /><Btn n="tileh" /><Btn n="tilev" /><Btn n="trayin" /><Btn n="trayout" /><Sep />
            <Btn n="help" /><Btn n="exit" />
            <svg width="8" height="12" className="ml-[2px] shrink-0"><path d="M1 8h6L4 11z" /></svg>
          </div>

          <div className="flex h-[759px]">
            {/* side bar */}
            <div className="flex w-[113px] shrink-0 flex-col items-center border-l border-r border-[#d9d6c6] bg-[#8097a4]">
              <div className="flex h-[19px] w-full shrink-0 items-center justify-center border-b-2 border-r-2 border-t border-[#a09d8c] border-t-white bg-[#ece9d8]"><T w={67}>Справочники</T></div>
              <svg width="44" height="50" viewBox="0 0 132 150" className="mt-[15px] shrink-0">
                <path d="M72 14l16-9h20v50L78 66z" fill="#b98a1e" /><path d="M72 14l8 2v48l-8-3z" fill="#8f6a12" /><path d="M100 12l12-7 14 3-5 52-18 3z" fill="#c99a2c" />
                <path d="M80 16l18-8M102 14v46" stroke="#f1d27c" strokeWidth="3" />
                <path d="M5 55Q8 40 22 42L62 62 48 90 12 70Z" fill="#4a4a4a" /><path d="M14 46l46 22-4 9L10 55z" fill="#b9b9b9" />
                <path d="M45 72L68 52 100 62 120 85 110 110 92 128 70 115 50 92Z" fill="#6b6b6b" />
                <path d="M52 80L74 60M60 95L90 65M72 108L104 75M86 122L116 90" stroke="#e2e2e2" strokeWidth="7" /><path d="M58 90L82 62M68 102L98 68M80 118L112 82" stroke="#222" strokeWidth="4" />
                <circle cx="98" cy="112" r="14" fill="#3b3b3b" /><circle cx="98" cy="108" r="6" fill="#9a9a9a" />
              </svg>
              <div className="mt-[3px] flex h-[26px] shrink-0 flex-col items-center justify-between text-white"><T w={47}>Режущий</T><T w={59}>инструмент</T></div>
              <svg width="44" height="48" viewBox="0 0 132 144" className="mt-[14px] shrink-0">
                <path d="M68 14l18-8h18v54L68 68z" fill="#a97c1c" /><path d="M98 14l10-8h14v52l-24 8z" fill="#c99a2c" /><path d="M68 14l18-7M84 16v46M110 12v48" stroke="#efcf75" strokeWidth="3" />
                <path d="M4 122L18 72Q40 62 62 76Q90 64 112 74L128 122Q90 126 66 128Q40 124 4 122Z" fill="#584324" />
                <path d="M12 116L24 74Q44 66 62 78V122Q40 112 12 116ZM66 122V78Q88 66 108 76L120 116Q90 112 66 122Z" fill="#f1eedd" /><path d="M30 82l26 2M28 92l28 2M24 102l30 2M74 86l30-4M74 96l34-4M74 106l36-3" stroke="#b3ae96" strokeWidth="3" />
                <path d="M26 94Q10 60 36 42Q48 34 62 38L58 26L82 46L60 66V52Q34 54 34 88Z" fill="#11678f" />
              </svg>
              <T w={95} className="mt-[5px] text-white">Код блока расчета</T>
              <div className="mt-auto flex h-[19px] w-full shrink-0 items-center justify-center border-b-2 border-r-2 border-t border-[#a09d8c] border-t-white bg-[#ece9d8]"><T w={63}>Программы</T></div>
            </div>

            <div className="flex w-[8px] shrink-0 flex-col items-center border-l border-r border-[#a5a290] bg-[#efede2]">
              <svg width="5" height="18" className="shrink-0"><path d="M4 7v7L.5 10.500z" fill="#000080" /></svg>
              <div className="w-px flex-1 bg-[repeating-linear-gradient(to_bottom,#000080_0_1px,transparent_1px_3px)]" />
              <svg width="5" height="16" className="shrink-0"><path d="M4 2v7L.5 5.500z" fill="#000080" /></svg>
            </div>

            <div className="flex w-[960px] flex-col">
              <div className="flex h-[317px] shrink-0">
                {/* structure panel */}
                <div className="flex w-[333px] shrink-0 flex-col pl-px">
                  <div className="flex h-[20px] shrink-0 items-end">
                    <div className="flex h-[20px] w-[45px] justify-start rounded-t-[3px] border-l border-r border-t-2 border-[#919b9c] border-t-[#f0a030] bg-[#fcfcfa] pl-[6px] pt-[2px]"><T w={22}>КТЭ</T></div>
                    <div className="flex h-[18px] w-[39px] rounded-t-[3px] border-r border-t border-[#919b9c] bg-[#fbfaf6] pl-[5px] pt-[3px]"><T w={16}>ИИ</T></div>
                  </div>
                  <div className="flex h-[295px] w-[327px] flex-col border-2 border-[#98a2a8] border-l-[#c3c6c2] border-t-[#fcfcfa] bg-[#f7f6f0] pl-px pr-px">
                    <div className="flex h-[31px] shrink-0 items-center bg-[#ece9d8] pb-[5px]">
                      <Btn n="up" /><Btn n="down" /><Btn n="collapse" /><Btn n="expand" /><Btn n="goto" /><Btn n="del" /><Btn n="pick" />
                    </div>
                    <div className="h-[237px] shrink-0 border border-[#7f9db9] bg-white pl-px"><Tree rows={tree1} /></div>
                    <div className="ml-[4px] flex h-[18px] shrink-0 items-center bg-[#ece9d8] pl-[4px]"><Check /><T w={133} className="ml-[4px]">Показывать в технологии</T></div>
                  </div>
                </div>

                {/* plan panel */}
                <div className="flex w-[627px] flex-col">
                  <div className="flex h-[22px] shrink-0 items-end border-b border-black bg-[#fffde9]">
                    <div className="-mb-px ml-[4px] flex h-[20px] w-[95px] items-center border border-b-0 border-black bg-[#ece9d8] pl-[5px]"><T w={83}>План обработки</T></div>
                    <T w={49} className="mb-[3px] ml-[3px]">Атрибуты</T>
                  </div>
                  <div className="mt-[2px] flex h-[293px]">
                    <div className="flex w-[234px] shrink-0 flex-col">
                      <HoleSketch />
                      <HSplit className="ml-px mt-px h-[9px]" />
                      <div className="ml-px mt-px flex h-[20px] shrink-0 items-center border border-[#a5a290] bg-[#ece9d8] pl-[3px]">
                        <T w={81}>Имя параметра</T><div className="ml-[23px] mr-[2px] h-[16px] w-px bg-[#aca899]" /><T w={49}>Значение</T>
                      </div>
                      <div className="ml-px h-[16px] shrink-0 border-b border-l border-[#a5a290] bg-white" />
                      <div className="ml-px mt-[2px] flex h-[21px] shrink-0 items-center justify-center rounded-[3px] border border-[#003c74] bg-[linear-gradient(to_bottom,#fff,#ecebe5)]"><T w={131}>Получить план обработки</T></div>
                    </div>
                    <VSplit className="ml-[2px] w-[8px]" />
                    <div className="ml-px flex flex-1 flex-col">
                      <div className="flex h-[29px] shrink-0 items-center pb-[8px]"><Btn n="up" /><Btn n="down" /><Btn n="bookblue" /><Btn n="del" /></div>
                      <div className="flex-1 border border-[#7f9db9] bg-white"><Tree rows={tree3} /></div>
                    </div>
                  </div>
                </div>
              </div>

              <HSplit className="ml-[2px] h-[8px]" />

              <div className="flex h-[434px]">
                {/* process panel */}
                <div className="flex w-[346px] shrink-0 flex-col pl-px">
                  <div className="flex h-[31px] shrink-0 items-center pb-[5px]">
                    <Btn n="up" /><Btn n="down" /><Btn n="collapse" /><Btn n="expand" /><Btn n="del" /><Btn n="pick" />
                  </div>
                  <div className="ml-px flex h-[378px] w-[342px] shrink-0 flex-col border border-[#7f9db9] bg-white">
                    <div className="flex min-h-0 flex-1">
                      <div className="flex w-[323px] flex-col overflow-hidden">
                        <div className="flex h-[20px] shrink-0 items-center border-b-2 border-[#c9c5b0] bg-[#ece9d8] pl-[2px]"><T w={76} className="text-[11px]">Наименование</T></div>
                        <div className="min-h-0 flex-1 overflow-hidden"><Tree rows={tree2} /></div>
                      </div>
                      <div className="flex w-[17px] flex-col border-l border-[#eeede5] bg-[#f6f5f0]">
                        <svg width="16" height="17" className="shrink-0"><rect x=".5" y=".5" width="14" height="15" rx="2" fill="#c3d3fb" stroke="#9cb4ea" /><path d="M4 10l3.500-3.500L11 10" fill="none" stroke="#34496e" strokeWidth="2" /></svg>
                        <div className="flex h-[271px] w-[15px] flex-col items-center justify-center gap-px rounded-[2px] border border-[#9cb4ea] bg-[linear-gradient(to_right,#cfdcfd,#bdcffa)]">
                          <div className="h-px w-[7px] bg-[#8aa5e0]" /><div className="h-px w-[7px] bg-white" /><div className="h-px w-[7px] bg-[#8aa5e0]" /><div className="h-px w-[7px] bg-white" /><div className="h-px w-[7px] bg-[#8aa5e0]" />
                        </div>
                        <svg width="16" height="17" className="mt-auto shrink-0"><rect x=".5" y=".5" width="14" height="15" rx="2" fill="#c3d3fb" stroke="#9cb4ea" /><path d="M4 6l3.500 3.500L11 6" fill="none" stroke="#34496e" strokeWidth="2" /></svg>
                      </div>
                    </div>
                  </div>
                  <div className="flex h-[20px] items-center pl-[8px]"><Check /><T w={87} className="ml-[3px]">Показывать КТЭ</T></div>
                </div>

                {/* detail panel */}
                <div className="flex w-[614px] flex-col border-l border-[#bcb9a8] pl-[2px]">
                  <div className="flex h-[23px] shrink-0 items-end border-b border-black bg-[#fffde9]">
                    <T w={82} className="mb-[3px] ml-[10px]">Текст операции</T>
                    <div className="mb-[2px] ml-[4px] mr-[3px] h-[14px] w-px bg-[#aca899]" />
                    <T w={49} className="mb-[3px]">Атрибуты</T>
                    <div className="-mb-px ml-[5px] flex h-[20px] w-[80px] items-center border border-b-0 border-black bg-[#ece9d8] pl-[4px]"><T w={70}>Информация</T></div>
                  </div>
                  <div className="mt-[2px] flex h-[385px] shrink-0">
                    <div className="flex w-[343px] shrink-0 flex-col border border-[#7f9db9] bg-white">
                      <div className="flex h-[19px] shrink-0 items-center border-b-2 border-[#c9c5b0] bg-[#ece9d8] pl-[3px]">
                        <T w={51}>Параметр</T><div className="ml-[107px] mr-[4px] h-[12px] w-px bg-[#aca899]" /><T w={49}>Значение</T>
                      </div>
                      {params.map(([a, aw, b, bw], n) => (
                        <div key={n} className="flex h-[18px] shrink-0 border-b border-[#aca899]">
                          <div className="flex w-[162px] shrink-0 items-center overflow-hidden border-r border-[#aca899] pl-[3px]"><T w={aw}>{a}</T></div>
                          <div className="flex items-center pl-[2px]"><T w={bw}>{b}</T></div>
                        </div>
                      ))}
                    </div>
                    <VSplit bottom className="ml-[2px] w-[8px]" />
                    <div className="ml-px border border-[#a5a290] bg-white"><DrillSketch /></div>
                  </div>
                  <div className="mt-[2px] flex flex-1 items-start border-t border-black bg-[#fffde9]">
                    <div className="-mt-px ml-[4px] flex h-[20px] w-[122px] items-center border border-t-0 border-black bg-[#ece9d8] pl-[5px]"><T w={111}>Режущий инструмент</T></div>
                  </div>
                </div>
              </div>
            </div>
          </div>
        </div>
      </div>

      {/* floating model window */}
      <div className="absolute left-[663px] top-[262px] flex h-[298px] w-[418px] flex-col border-4 border-t-0 border-[#7486de] bg-[#ece9d8]">
        <div className="-mx-[4px] flex h-[22px] shrink-0 items-center bg-[linear-gradient(to_bottom,#6878d0_0,#9cb0f0_2px,#7a94e2_8px,#829be6_16px,#8aa2ea_22px)] pl-[4px] pr-[5px] pt-px">
          <T w={65} className="font-['DejaVu_Sans'] text-[11px] font-bold text-[#e0e8fa]">3D-модель</T>
          <svg width="13" height="13" className="ml-auto"><rect x=".5" y=".5" width="12" height="12" rx="1.500" fill="#c0616a" stroke="#fff" /><path d="M3.500 3.500l6 6M9.500 3.500l-6 6" stroke="#fff" strokeWidth="2" /></svg>
        </div>
        <ModelBar />
        <div className="h-[249px] w-[410px] border-l border-t border-[#77766c]"><Model /></div>
      </div>
    </div>
  );
}
